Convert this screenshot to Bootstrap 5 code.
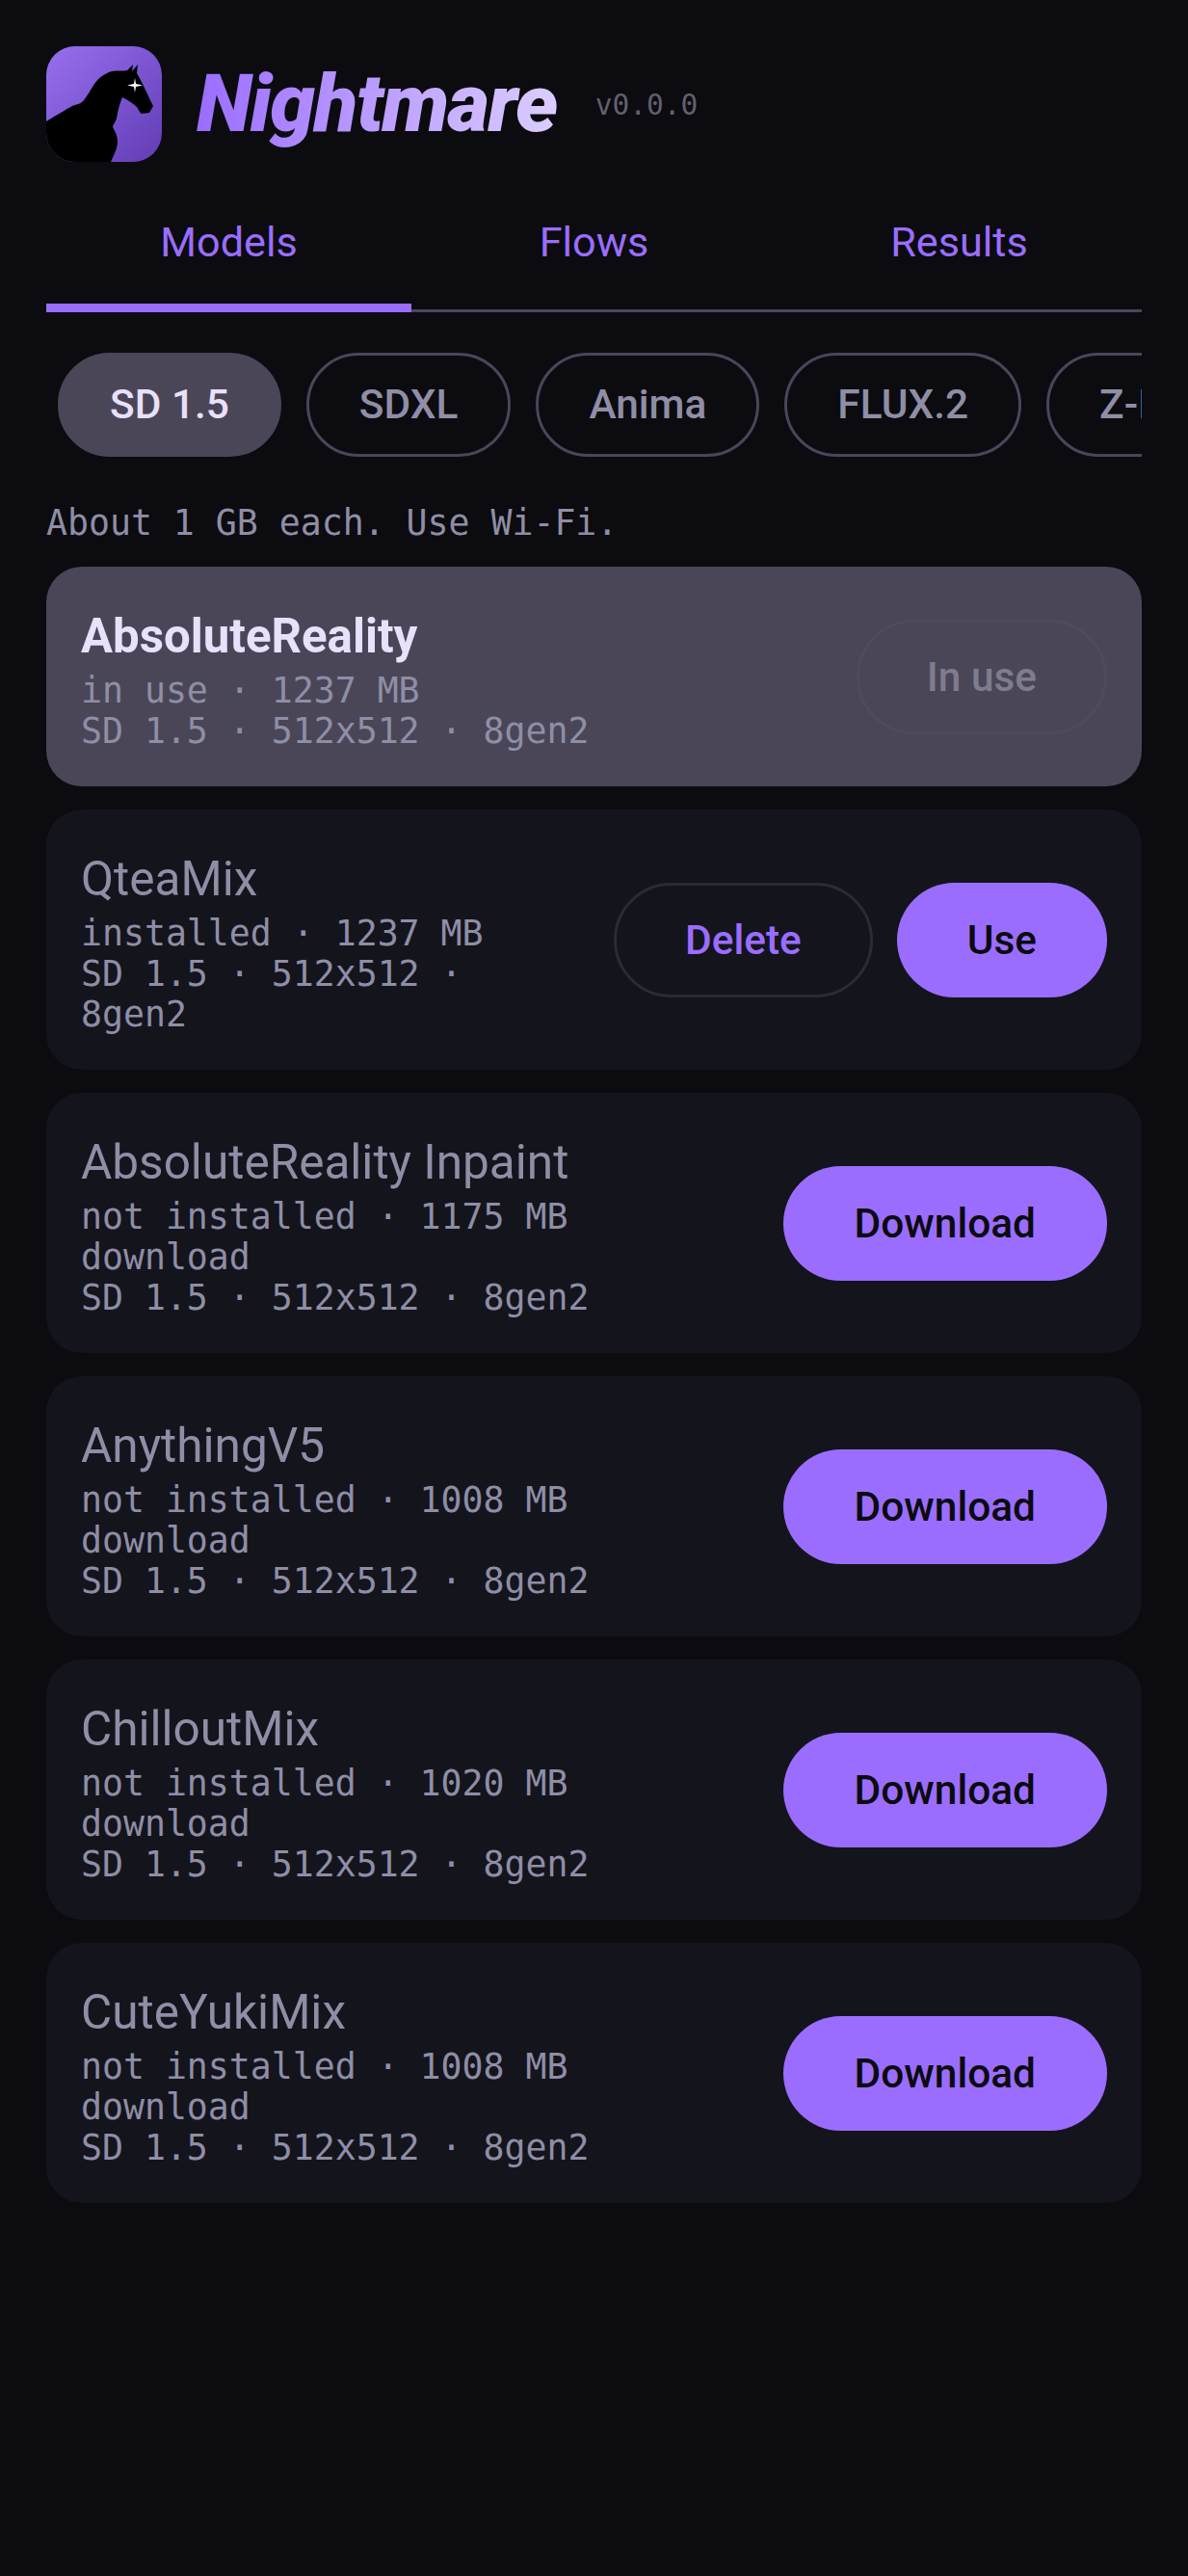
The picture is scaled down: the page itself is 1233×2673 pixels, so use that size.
<!DOCTYPE html>
<html lang="en">
<head>
  <meta charset="UTF-8" />
  <meta name="viewport" content="width=device-width, initial-scale=1" />
  <title>Nightmare</title>
  <link href="https://cdn.jsdelivr.net/npm/bootstrap@5.3.3/dist/css/bootstrap.min.css" rel="stylesheet" />
  <style>
    body {
      background-color: #0b0b10;
      font-family: Roboto, sans-serif;
      min-height: 2673px;
    }

    .app-wrap { padding: 48px 48px 0; }

    /* Header */
    .app-logo { width: 120px; height: 120px; flex: none; }
    .app-title {
      font-size: 84px;
      line-height: 120px;
      font-weight: 900;
      font-style: italic;
      letter-spacing: -1.65px;
      margin: 0 0 0 36px;
      padding-right: 6px;
      background: linear-gradient(90deg, #9b6dff 0%, #dccfff 100%);
      -webkit-background-clip: text;
      background-clip: text;
      color: transparent;
    }
    .app-version {
      font-family: "DejaVu Sans Mono", monospace;
      font-size: 29.500px;
      color: #62606e;
      margin-left: 34px;
      margin-top: 2px;
    }

    /* Tabs */
    .tab-row { border-bottom: 3px solid #49465a; margin-top: 24px; height: 132px; }
    .tab-item {
      flex: 1 1 0;
      text-align: center;
      font-size: 43.2px;
      line-height: 52px;
      padding-top: 34px;
      color: #9b6dff;
      margin-bottom: -3px;
    }
    .tab-item.is-active { border-bottom: 9px solid #9b6dff; }

    /* Pills */
    .pill-row { margin-top: 42px; padding-left: 12px; gap: 26px; overflow: hidden; }
    .pill-item {
      flex: none;
      height: 108px;
      padding: 0 52px;
      border: 3px solid #49465a;
      border-radius: 54px;
      font-size: 42.4px;
      font-weight: 500;
      line-height: 102px;
      color: #8f8ea6;
      white-space: nowrap;
    }
    .pill-item.is-active {
      background-color: #4a4658;
      border-color: #4a4658;
      color: #e9e0fb;
      padding: 0 51px;
    }

    .hint-text {
      font-family: "DejaVu Sans Mono", monospace;
      font-size: 36.500px;
      line-height: 42px;
      color: #8f8ea6;
      margin: 47.500px 0 24.500px;
    }

    /* Model cards */
    .model-list { gap: 24.500px; }
    .model-card {
      background-color: #14141d;
      border-radius: 37px;
      padding: 37.500px 36px 35.500px;
      gap: 25px;
    }
    .model-card.is-current { background-color: #4a4658; }
    .model-text { flex: 1 1 0; min-width: 0; margin-right: 23px; }
    .model-name {
      font-size: 49.500px;
      line-height: 68px;
      margin-bottom: 2.500px;
      color: #8f8ea6;
    }
    .is-current .model-name { font-size: 49.200px; font-weight: 700; color: #e9e0fb; }
    .model-meta {
      font-family: "DejaVu Sans Mono", monospace;
      font-size: 36.500px;
      line-height: 42px;
      color: #8f8ea6;
    }
    .model-btn {
      flex: none;
      height: 119px;
      border-radius: 60px;
      padding: 0 74px;
      font-size: 42.4px;
      font-weight: 500;
      line-height: 1;
      border: 0;
      display: flex;
      align-items: center;
    }
    .btn-fill { background-color: #9b6dff; color: #0b0b10; }
    .btn-fill.btn-short { padding: 0 73px; }
    .btn-line { background: transparent; border: 3px solid #2b2a37; color: #9b6dff; padding: 0 71px; }
    .btn-off { background: transparent; border: 3px solid #4f4b5e; color: #7f7c8e; padding: 0 70px; }
  </style>
</head>
<body>

<div class="app-wrap">
  <!-- Header -->
  <div class="d-flex align-items-center">
    <svg class="app-logo" viewBox="0 0 120 120" aria-label="Nightmare logo">
      <defs>
        <linearGradient id="logoBg" x1="0" y1="0" x2="1" y2="1">
          <stop offset="0" stop-color="#9670f0" />
          <stop offset="1" stop-color="#623cb4" />
        </linearGradient>
        <clipPath id="logoClip"><rect width="120" height="120" rx="30" /></clipPath>
      </defs>
      <g clip-path="url(#logoClip)">
        <rect width="120" height="120" fill="url(#logoBg)" />
        <path d="M0 78 C10 72 20 66 27 62 C32 60 36 60 39 56 C43 51 46 45 50 39 C55 32 61 28 68 26 C74 25 80 26 84 25 L90 19 L89 26 L95 19 L94 28 C99 36 105 50 111 62 L107 69 L99 70 C97 69 96 66 94 63 C90 59 85 56 79 53 C76 60 74 68 73 75 C71 80 69 82 69 84 C71 88 74 92 74 99 C74 106 70 113 67 120 L0 120 Z" fill="#000" />
        <path d="M92 33 L93 39 L100 40.500 L93 42 L92 48 L91 42 L84 40.500 L91 39 Z" fill="#fff" />
      </g>
    </svg>
    <h1 class="app-title">Nightmare</h1>
    <span class="app-version">v0.0.0</span>
  </div>

  <!-- Tabs -->
  <div class="tab-row d-flex">
    <div class="tab-item is-active">Models</div>
    <div class="tab-item">Flows</div>
    <div class="tab-item">Results</div>
  </div>

  <!-- Family filter -->
  <div class="pill-row d-flex">
    <div class="pill-item is-active">SD 1.5</div>
    <div class="pill-item">SDXL</div>
    <div class="pill-item">Anima</div>
    <div class="pill-item">FLUX.2</div>
    <div class="pill-item">Z-Image</div>
  </div>

  <p class="hint-text">About 1 GB each. Use Wi-Fi.</p>

  <!-- Model list -->
  <div class="model-list d-flex flex-column">
    <div class="model-card is-current d-flex align-items-center">
      <div class="model-text">
        <div class="model-name">AbsoluteReality</div>
        <div class="model-meta">in use · 1237 MB</div>
        <div class="model-meta">SD 1.5 · 512x512 · 8gen2</div>
      </div>
      <div class="model-btn btn-off">In use</div>
    </div>

    <div class="model-card d-flex align-items-center">
      <div class="model-text">
        <div class="model-name">QteaMix</div>
        <div class="model-meta">installed · 1237 MB</div>
        <div class="model-meta">SD 1.5 · 512x512 · 8gen2</div>
      </div>
      <div class="model-btn btn-line">Delete</div>
      <div class="model-btn btn-fill btn-short">Use</div>
    </div>

    <div class="model-card d-flex align-items-center">
      <div class="model-text">
        <div class="model-name">AbsoluteReality Inpaint</div>
        <div class="model-meta">not installed · 1175 MB download</div>
        <div class="model-meta">SD 1.5 · 512x512 · 8gen2</div>
      </div>
      <div class="model-btn btn-fill">Download</div>
    </div>

    <div class="model-card d-flex align-items-center">
      <div class="model-text">
        <div class="model-name">AnythingV5</div>
        <div class="model-meta">not installed · 1008 MB download</div>
        <div class="model-meta">SD 1.5 · 512x512 · 8gen2</div>
      </div>
      <div class="model-btn btn-fill">Download</div>
    </div>

    <div class="model-card d-flex align-items-center">
      <div class="model-text">
        <div class="model-name">ChilloutMix</div>
        <div class="model-meta">not installed · 1020 MB download</div>
        <div class="model-meta">SD 1.5 · 512x512 · 8gen2</div>
      </div>
      <div class="model-btn btn-fill">Download</div>
    </div>

    <div class="model-card d-flex align-items-center">
      <div class="model-text">
        <div class="model-name">CuteYukiMix</div>
        <div class="model-meta">not installed · 1008 MB download</div>
        <div class="model-meta">SD 1.5 · 512x512 · 8gen2</div>
      </div>
      <div class="model-btn btn-fill">Download</div>
    </div>
  </div>
</div>

<script src="https://cdn.jsdelivr.net/npm/bootstrap@5.3.3/dist/js/bootstrap.bundle.min.js"></script>
</body>
</html>
